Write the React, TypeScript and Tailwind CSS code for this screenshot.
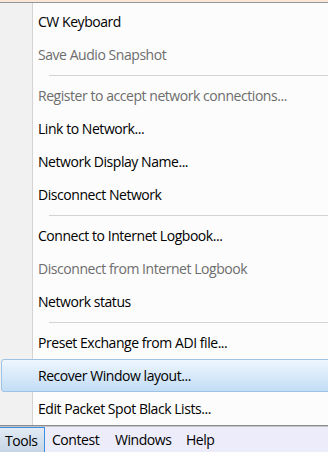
import React from 'react';

type Entry = { label?: string; disabled?: boolean; active?: boolean; sep?: boolean };

const entries: Entry[] = [
  { label: 'CW Keyboard' },
  { label: 'Save Audio Snapshot', disabled: true },
  { sep: true },
  { label: 'Register to accept network connections...', disabled: true },
  { label: 'Link to Network...' },
  { label: 'Network Display Name...' },
  { label: 'Disconnect Network' },
  { sep: true },
  { label: 'Connect to Internet Logbook...' },
  { label: 'Disconnect from Internet Logbook', disabled: true },
  { label: 'Network status' },
  { sep: true },
  { label: 'Preset Exchange from ADI file...' },
  { label: 'Recover Window layout...', active: true },
  { label: 'Edit Packet Spot Black Lists...' },
];

// menu bar labels with their slot widths
const menuBar = [
  { label: 'Tools', w: 'w-[47px]' },
  { label: 'Contest', w: 'w-[63px]' },
  { label: 'Windows', w: 'w-[71px]' },
  { label: 'Help', w: 'w-[50px]' },
];

const MenuRow: React.FC<{ entry: Entry }> = ({ entry }) => {
  if (entry.sep) {
    return (
      <div className="h-[8px] flex flex-col justify-center pl-[49px]">
        <div className="h-px bg-[#d3d3d3]" />
      </div>
    );
  }
  if (entry.active) {
    return (
      <div className="h-[33px] ml-[1px] -mr-[10px] flex items-center pl-[36px] rounded-[3px] border border-[#9dc2e5] bg-gradient-to-b from-[#eef6fe] to-[#c3ddf5] text-black">
        {entry.label}
      </div>
    );
  }
  return (
    <div className={`h-[33px] flex items-center pl-[38px] ${entry.disabled ? 'text-[#6d6d6d]' : 'text-black'}`}>
      {entry.label}
    </div>
  );
};

export default function App() {
  return (
    <div className="w-[328px] h-[452px] overflow-hidden flex flex-col bg-[#fbe5d6] font-['Open_Sans',sans-serif] text-[14px] tracking-[-0.45px]">
      <div className="h-[2px] shrink-0" />
      <div className="flex-1 flex flex-col pt-[2px] border-t border-[#979797] bg-[linear-gradient(to_right,#f1f1f1_32px,#d4d4d4_32px,#d4d4d4_33px,#fcfcfc_33px)]">
        {entries.map((e, i) => (
          <MenuRow key={i} entry={e} />
        ))}
      </div>
      <div className="h-px shrink-0 bg-[#8c8c8c]" />
      <div className="h-px shrink-0 bg-[#c4c4c8]" />
      <div className="h-[25px] shrink-0 flex items-stretch bg-[#ececfa] text-black">
        {menuBar.map((m, i) => (
          <div
            key={m.label}
            className={
              i === 0
                ? `${m.w} shrink-0 -ml-[2px] pl-[7px] flex items-center border-t border-r border-[#3c8fe0] bg-gradient-to-b from-[#e3ebf4] to-[#c6d5e6]`
                : `${m.w} shrink-0 pl-[7px] flex items-center`
            }
          >
            {m.label}
          </div>
        ))}
      </div>
    </div>
  );
}
